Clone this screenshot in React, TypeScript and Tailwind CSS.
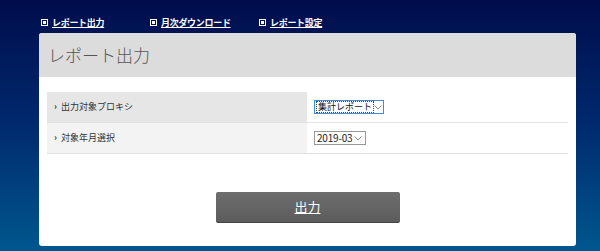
import React from 'react';

const font = { fontFamily: '"Noto Sans CJK JP", "Noto Sans", sans-serif' };

function NavLink({ label }: { label: string }) {
  return (
    <a href="#" className="flex w-[109px] items-center gap-[4px] text-[9px] font-bold leading-none text-white underline">
      <span className="flex h-[7px] w-[7px] items-center justify-center border border-white">
        <span className="h-[3px] w-[3px] bg-white" />
      </span>
      <span className="tracking-[-0.3px]">{label}</span>
    </a>
  );
}

function Row({ label, children, shade }: { label: string; children: React.ReactNode; shade: string }) {
  return (
    <div className="flex h-[31px] border-b border-[#e2e2e2]">
      <div className={`flex w-[260px] items-center gap-[4px] pl-[7px] text-[9px] text-[#333] ${shade}`}>
        <span className="text-[9px] font-bold">›</span>
        <span>{label}</span>
      </div>
      <div className="flex flex-1 items-center pl-[7px]">{children}</div>
    </div>
  );
}

function Chevron() {
  return (
    <svg className="ml-auto mr-[3px] shrink-0" width="8" height="5" viewBox="0 0 8 5">
      <path d="M0.5 0.5 L4 4 L7.5 0.5" fill="none" stroke="#888" strokeWidth="1" />
    </svg>
  );
}

export default function App() {
  return (
    <div
      className="h-[251px] w-[600px] overflow-hidden bg-gradient-to-b from-[#000c4c] via-[#002a6e] to-[#00578f]"
      style={font}
    >
      {/* Top navigation */}
      <div className="flex pl-[41px] pt-[18px]">
        <NavLink label="レポート出力" />
        <NavLink label="月次ダウンロード" />
        <NavLink label="レポート設定" />
      </div>

      {/* Card */}
      <div className="ml-[39px] mt-[6px] w-[537px] overflow-hidden rounded-[3px] bg-white">
        <div className="flex h-[44px] items-center bg-[#dcdcdc] pl-[9px] text-[17px] font-light text-[#555]">
          レポート出力
        </div>

        <div className="px-[8px] pt-[15px]">
          <div className="flex flex-col">
            <Row label="出力対象プロキシ" shade="bg-[#e6e6e6]">
              <div className="flex h-[14px] w-[70px] items-center border border-[#3c8de0] bg-white text-[#111]">
                <span className="ml-[1px] whitespace-nowrap border border-dotted border-[#444] px-[1px] text-[9px] leading-[10px]">
                  集計レポート
                </span>
                <Chevron />
              </div>
            </Row>
            <Row label="対象年月選択" shade="bg-[#f3f3f3]">
              <div className="flex h-[14px] w-[52px] items-center border border-[#999] bg-white pl-[2px] text-[10px] text-[#222]">
                <span className="whitespace-nowrap leading-none tracking-[-0.2px]">2019-03</span>
                <Chevron />
              </div>
            </Row>
          </div>

          <div className="flex justify-center pb-[23px] pt-[38px]">
            <button className="h-[31px] w-[184px] rounded-[2px] border-b border-[#444] bg-gradient-to-b from-[#6e6e6e] to-[#5c5c5c] text-[13px] text-white underline">
              出力
            </button>
          </div>
        </div>
      </div>
    </div>
  );
}
